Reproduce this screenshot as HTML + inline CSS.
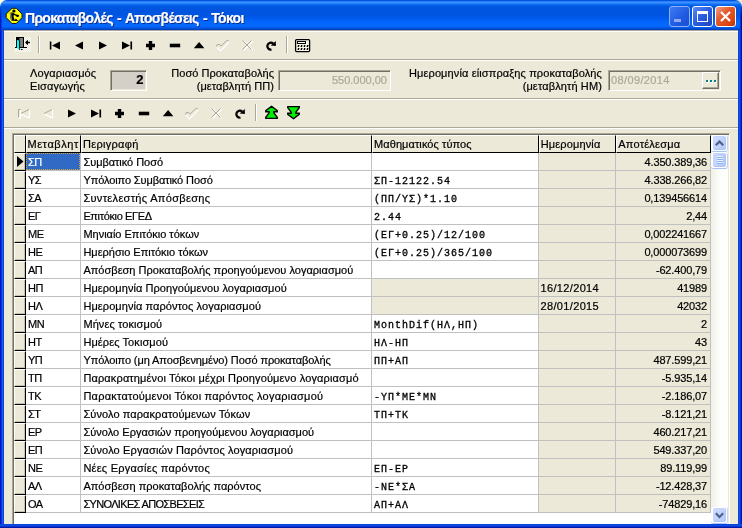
<!DOCTYPE html>
<html><head><meta charset="utf-8"><title>w</title>
<style>
html,body{margin:0;padding:0;}
body{will-change:transform;-webkit-text-stroke:.2px;width:742px;height:528px;overflow:hidden;position:relative;background:#ece9d8;font-family:"Liberation Sans",sans-serif;font-size:11px;color:#000;}
.abs{position:absolute;}
#title{left:0;top:0;width:742px;height:30px;background:linear-gradient(to bottom,#0052e0 1.67%,#2a7efb 5.00%,#3d90ff 8.33%,#2581fb 11.67%,#0f6df2 15.00%,#0460e9 18.33%,#0059e3 21.67%,#0055e0 25.00%,#0055e0 48.33%,#0057e6 55.00%,#005bee 61.67%,#0161f6 68.33%,#0367fd 75.00%,#0468fe 85.00%,#0364f8 88.33%,#025bea 91.67%,#014fd6 95.00%,#0043be 98.33%);border-radius:7px 7px 0 0;}
#cornerL{left:0;top:0;width:8px;height:8px;background:#fffde6;}
#cornerR{left:734px;top:0;width:8px;height:8px;background:#ece9d8;}
#bl{left:0;top:30px;width:4px;height:498px;background:linear-gradient(to right,#0016ca 0,#0016ca 25%,#0733d9 25%,#0733d9 50%,#1560e9 50%,#1560e9 75%,#0a44dd 75%,#0a44dd 100%);}
#br{left:738px;top:30px;width:4px;height:498px;background:linear-gradient(to right,#0a44dd 0,#0a44dd 25%,#104fe3 25%,#104fe3 50%,#0733d9 50%,#0733d9 75%,#0016b8 75%,#0016b8 100%);}
#bb{left:0;top:524px;width:742px;height:4px;background:linear-gradient(to bottom,#0a44dd 0,#0a44dd 25%,#0e4ce2 25%,#0e4ce2 50%,#0835d2 50%,#0835d2 75%,#001aa8 75%,#001aa8 100%);}
#ttext{left:25px;top:10px;color:#fff;font-weight:bold;font-size:14px;line-height:16px;white-space:nowrap;text-shadow:1px 1px 0 #0a2a8c;letter-spacing:-0.71px;word-spacing:1.2px;}
.cb{top:6px;width:21px;height:21px;border-radius:3px;box-sizing:border-box;border:1px solid #fff;}
.hl{left:4px;width:734px;height:1px;}
.lbl{font-size:11px;line-height:13px;white-space:nowrap;letter-spacing:.12px;}
.inp{box-sizing:border-box;border:1px solid;border-color:#7f9db9;}
.sunk{box-sizing:border-box;border-top:1px solid #aca899;border-left:1px solid #aca899;border-bottom:1px solid #fff;border-right:1px solid #fff;box-shadow:inset 1px 1px 0 #716f64,inset -1px -1px 0 #ece9d8;}
#grid{left:12px;top:133px;width:718px;height:391px;background:#fff;box-sizing:border-box;border-top:1px solid #aca899;border-left:1px solid #aca899;border-right:1px solid #fff;box-shadow:inset 1px 1px 0 #716f64,inset -1px 0 0 #ece9d8;}
.cell{position:absolute;height:18px;line-height:18px;font-size:11px;white-space:nowrap;overflow:hidden;box-sizing:border-box;}
.mono{font-family:"Liberation Mono",monospace;font-size:10px;letter-spacing:1px;line-height:22px;-webkit-text-stroke:.3px #000;}
.hd{position:absolute;top:135px;height:18px;background:#ece9d8;box-sizing:border-box;border-right:1px solid #000;border-bottom:1px solid #000;border-top:1px solid #fff;border-left:1px solid #fff;font-size:11px;line-height:16px;padding-left:2px;white-space:nowrap;overflow:hidden;}
</style></head><body>

<div class="abs" id="cornerL"></div><div class="abs" id="cornerR"></div>
<div class="abs" id="title"></div>
<div class="abs" id="bl"></div><div class="abs" id="br"></div><div class="abs" id="bb"></div>
<div class="abs" style="left:740px;top:7px;width:1px;height:23px;background:linear-gradient(to bottom,rgba(8,48,208,0),#0830d0 40%)"></div><div class="abs" style="left:741px;top:7px;width:1px;height:23px;background:linear-gradient(to bottom,rgba(0,22,160,.3),#00138c 40%)"></div><div class="abs" style="left:0;top:7px;width:1px;height:23px;background:linear-gradient(to bottom,rgba(0,22,202,.2),#0016ca 50%)"></div><div class="abs" style="left:1px;top:7px;width:1px;height:23px;background:linear-gradient(to bottom,rgba(7,51,217,0),rgba(7,51,217,.8) 60%)"></div>
<svg class="abs" style="left:0px;top:0px" width="30" height="30" viewBox="0 0 30 30"><path d="M12 8.300h4.300l5.700 5.700v3.600l-5.700 5.900h-4.300l-5.800 -5.900v-3.600z" fill="#ffff00" stroke="#1a1a00" stroke-width="1"/><circle cx="13.900" cy="11" r="1.600" fill="#000"/><path d="M12 12.600l2.400 .6l-.9 3.300l.1 4.200h-2.200l-1.200 -3.500l.2 -3z" fill="#111"/><path d="M10.600 14.200l.9 6.300" stroke="#888" stroke-width="1.200"/><path d="M9.500 13.200l3 -.5" stroke="#444" stroke-width=".8"/><path d="M13.400 14.200l4 1.500" stroke="#000" stroke-width="1.400"/><path d="M16.600 14.800l2.500 .3l-.6 1.900h-2z" fill="#000"/><path d="M12.800 17l1.300 3.700" stroke="#000" stroke-width="1.400"/><path d="M13.900 20.900l2.100 -2.300l2.100 2.300z" fill="#000"/></svg>
<div class="abs" id="ttext">Προκαταβολές - Αποσβέσεις - Τόκοι</div>
<div class="abs cb" style="left:669px;background:linear-gradient(135deg,#3f7af2,#1f5be2 60%,#1b4fd2);border-color:#8fb0f4;"><div class="abs" style="left:4px;top:12px;width:7px;height:3px;background:#8fa8f0"></div></div>
<div class="abs cb" style="left:692px;background:linear-gradient(135deg,#5b8af5,#2a5be0 50%,#1e46c2);"><div class="abs" style="left:4px;top:4px;width:11px;height:11px;box-sizing:border-box;border:1px solid #fff;border-top:3px solid #fff;"></div></div>
<div class="abs cb" style="left:715px;background:linear-gradient(135deg,#f0a085 0,#e35a2e 40%,#dc4712 75%,#bb3203 100%);"><svg class="abs" style="left:0;top:0" width="19" height="19"><path d="M5 5l9 9M14 5l-9 9" stroke="#fff" stroke-width="2.2"/></svg></div>
<div class="abs hl" style="top:30px;background:#aca899"></div><div class="abs hl" style="top:31px;background:#fff"></div>
<div class="abs hl" style="top:59px;background:#aca899"></div><div class="abs hl" style="top:60px;background:#fff"></div>
<div class="abs hl" style="top:98px;background:#aca899"></div><div class="abs hl" style="top:99px;background:#fff"></div>
<div class="abs hl" style="top:127px;background:#aca899"></div><div class="abs hl" style="top:128px;background:#fff"></div>
<svg class="abs" style="left:0;top:30px" width="742" height="29" viewBox="0 30 742 29">
<g><defs><pattern id="dz" width="2" height="2" patternUnits="userSpaceOnUse"><rect width="2" height="2" fill="#ece9d8"/><rect width="1" height="1" fill="#fff"/><rect x="1" y="1" width="1" height="1" fill="#fff"/></pattern></defs><rect x="15" y="37" width="16" height="15" fill="url(#dz)"/><rect x="16" y="37" width="8" height="11" fill="#000"/><rect x="19.500" y="38" width="3.500" height="9" fill="#808080"/><path d="M15 47.500h12" stroke="#000" stroke-width="1"/><path d="M17 40l2.200 .5v9.500l-2.200 -2z" fill="#00ffff"/><path d="M19.600 40.500v9.500" stroke="#000" stroke-width=".8"/><path d="M21 49.500h1.500" stroke="#000"/><path d="M25 42.500l2.200 -2.200h.8v1.500h2v1.400h-2v1.500h-.8z" fill="#000"/></g>
<path d="M38.5 36v17" stroke="#aca899"/><path d="M39.5 36v17" stroke="#fff"/>
<path fill="#000" d="M49.8 41.5h1.600v8h-1.600zM60 41.5v8l-8 -4z"/><path fill="#000" d="M83 41.5v8l-8 -4z"/><path fill="#000" d="M99 41.5v8l8 -4z"/><path fill="#000" d="M130.4 41.5h1.700v8h-1.700zM122 41.5v8l8 -4z"/><path fill="#000" d="M148.8 41.0h3.400v2.800h2.800v3.400h-2.800v2.800h-3.400v-2.800h-2.800v-3.400h2.800z"/><path fill="#000" d="M169.8 43.7h10.400v3.600h-10.400z"/><path fill="#000" d="M193.8 48.2h10.600l-5.300 -6.200z"/><path fill="none" stroke="#fff" stroke-width="1.200" d="M216.6 47.1l4 3.800l8.500 -8.700"/><path fill="none" stroke="#aca899" stroke-width="1" d="M216.5 46.5l.8 -2h2.200l1.700 1.500l5.600 -5.600h1.800"/><path fill="none" stroke="#fff" stroke-width="1.400" d="M243.8 41.3l9 9M252.8 41.3l-9 9"/><path fill="none" stroke="#aca899" stroke-width="1" d="M242.5 40.5l9 9M251.5 40.5l-9 9"/><path fill="none" stroke="#000" stroke-width="2.300" d="M271.5 49.6A3.500 3.500 0 1 1 273.2 43.6"/><path fill="#000" d="M275.8 41.0L275.9 45.9L270.7 45.6z"/>
<path d="M286.5 36v17" stroke="#aca899"/><path d="M287.5 36v17" stroke="#fff"/>
<g><rect x="295.600" y="39.600" width="14" height="12" rx="1" fill="#fbf8ea" stroke="#000" stroke-width="1.300"/><rect x="297.500" y="41.500" width="8" height="2" fill="#fff" stroke="#000" stroke-width="1"/>
<path d="M298 45h1.500l-.5 2h-1.500z" fill="#000"/>
<path d="M301 45h1.500l-.5 2h-1.500z" fill="#000"/>
<path d="M304 45h1.500l-.5 2h-1.500z" fill="#000"/>
<path d="M307 45h1.500l-.5 2h-1.500z" fill="#000"/>
<path d="M298 48h1.500l-.5 2h-1.500z" fill="#000"/>
<path d="M301 48h1.500l-.5 2h-1.500z" fill="#000"/>
<path d="M304 48h1.500l-.5 2h-1.500z" fill="#000"/>
<path d="M307 48h1.500l-.5 2h-1.500z" fill="#000"/>
</g></svg>
<div class="abs lbl" style="left:30px;top:67px">Λογαριασμός<br>Εισαγωγής</div>
<div class="abs sunk" style="left:110px;top:70px;width:37px;height:21px;background:#d4d0c8"></div>
<div class="abs" style="left:110.600px;top:72px;width:33px;text-align:right;font-size:13px;font-weight:bold;line-height:16px">2</div>
<div class="abs lbl" style="left:150px;top:67px;width:124px;text-align:right;letter-spacing:.06px">Ποσό Προκαταβολής<br>(μεταβλητή ΠΠ)</div>
<div class="abs sunk" style="left:278px;top:70px;width:113px;height:21px;background:#ece9d8"></div>
<div class="abs" style="left:278px;top:73px;width:109px;text-align:right;font-size:11px;color:#aca899;line-height:14px">550.000,00</div>
<div class="abs lbl" style="left:380px;top:67px;width:222px;text-align:right">Ημερομηνία είισπραξης προκαταβολής<br>(μεταβλητή ΗΜ)</div>
<div class="abs sunk" style="left:608px;top:70px;width:113px;height:21px;background:#ece9d8"></div>
<div class="abs" style="left:611px;top:73px;font-size:11px;color:#aca899;line-height:14px;letter-spacing:.38px">08/09/2014</div>
<div class="abs" style="left:702px;top:72px;width:17px;height:17px;box-sizing:border-box;background:#ece9d8;border-top:1px solid #fff;border-left:1px solid #fff;border-right:1px solid #716f64;border-bottom:1px solid #716f64;box-shadow:inset -1px -1px 0 #aca899"><div class="abs" style="left:3px;top:7px;width:2px;height:2px;background:#008284;box-shadow:1px 1px 0 #fff"></div><div class="abs" style="left:7px;top:7px;width:2px;height:2px;background:#008284;box-shadow:1px 1px 0 #fff"></div><div class="abs" style="left:11px;top:7px;width:2px;height:2px;background:#008284;box-shadow:1px 1px 0 #fff"></div></div>
<svg class="abs" style="left:0;top:100px" width="742" height="27" viewBox="0 100 742 27">
<path fill="none" stroke="#fff" stroke-width="1.300" d="M20.5 110.0v8h-2M21 114.1L29.5 118.1M29.5 109.5v8.600"/><path fill="none" stroke="#aca899" stroke-width="1" d="M18.5 117.5v-8h2M29 109.5L21 113.5"/><path fill="none" stroke="#fff" stroke-width="1.300" d="M44 114.1L52.5 118.1M52.5 109.5v8.600"/><path fill="none" stroke="#aca899" stroke-width="1" d="M52 109.5L44 113.5"/><path fill="#000" d="M68 109.5v8l8 -4z"/><path fill="#000" d="M99.4 109.5h1.700v8h-1.700zM91 109.5v8l8 -4z"/><path fill="#000" d="M117.8 109.0h3.400v2.800h2.800v3.400h-2.800v2.800h-3.400v-2.800h-2.800v-3.400h2.800z"/><path fill="#000" d="M138.8 111.7h10.400v3.600h-10.400z"/><path fill="#000" d="M162.8 116.2h10.600l-5.300 -6.200z"/><path fill="none" stroke="#fff" stroke-width="1.200" d="M185.6 115.1l4 3.800l8.500 -8.700"/><path fill="none" stroke="#aca899" stroke-width="1" d="M185.5 114.5l.8 -2h2.200l1.700 1.500l5.600 -5.600h1.800"/><path fill="none" stroke="#fff" stroke-width="1.400" d="M212.8 109.3l9 9M221.8 109.3l-9 9"/><path fill="none" stroke="#aca899" stroke-width="1" d="M211.5 108.5l9 9M220.5 108.5l-9 9"/><path fill="none" stroke="#000" stroke-width="2.300" d="M240.5 117.6A3.500 3.500 0 1 1 242.2 111.6"/><path fill="#000" d="M244.8 109.0L244.9 113.9L239.7 113.6z"/>
<path d="M255.5 104v17" stroke="#aca899"/><path d="M256.5 104v17" stroke="#fff"/>
<path d="M271.500 106.300l5.700 4.400v1.100h-3.300v1l3.300 4.500v1.100h-11.400v-1.100l3.300 -4.500v-1h-3.300v-1.100z" fill="#00f000" stroke="#000" stroke-width="1.400" stroke-linejoin="miter"/>
<path d="M293.500 118.700l5.700 -4.400v-1.100h-3.300v-1l3.300 -4.500v-1.100h-11.400v1.100l3.300 4.500v1h-3.300v1.100z" fill="#00f000" stroke="#000" stroke-width="1.400" stroke-linejoin="miter"/>
</svg>
<div class="abs" id="grid"></div>
<div class="hd" style="left:14px;width:12px;letter-spacing:0px;padding-left:1px"></div>
<div class="hd" style="left:26px;width:55px;letter-spacing:0.58px;padding-left:0.4px">Μεταβλητ</div>
<div class="hd" style="left:81px;width:291px;letter-spacing:0.3px;padding-left:1px">Περιγραφή</div>
<div class="hd" style="left:372px;width:167px;letter-spacing:0.08px;padding-left:1px">Μαθηματικός τύπος</div>
<div class="hd" style="left:539px;width:77px;letter-spacing:0.13px;padding-left:0.8px">Ημερομηνία</div>
<div class="hd" style="left:616px;width:95px;letter-spacing:0.24px;padding-left:1.2px">Αποτέλεσμα</div>
<div class="cell" style="left:14px;top:153px;width:12px;height:18px;background:#ece9d8;border-top:1px solid #fff;border-left:1px solid #fff;border-right:1px solid #000;border-bottom:1px solid #000;box-shadow:inset -1px -1px 0 #c5c2b2"></div>
<div class="cell" style="left:26px;top:153px;width:55px;border-right:1px solid #c0c0c0;border-bottom:1px solid #c0c0c0;padding-left:2px;letter-spacing:-0.5px;background:#316ac5;color:#fff;">ΣΠ</div>
<div class="cell" style="left:81px;top:153px;width:291px;border-right:1px solid #c0c0c0;border-bottom:1px solid #c0c0c0;padding-left:2.400px;letter-spacing:-0.038px">Συμβατικό Ποσό</div>
<div class="cell mono" style="left:372px;top:153px;width:167px;border-right:1px solid #c0c0c0;border-bottom:1px solid #c0c0c0;padding-left:2px;"></div>
<div class="cell" style="left:539px;top:153px;width:77px;border-right:1px solid #c0c0c0;border-bottom:1px solid #c0c0c0;padding-left:1.500px;letter-spacing:.35px;background:#ece9d8"></div>
<div class="cell" style="left:616px;top:153px;width:95px;border-right:1px solid #c0c0c0;border-bottom:1px solid #c0c0c0;padding-right:3px;letter-spacing:-.15px;text-align:right;background:#ece9d8">4.350.389,36</div>
<div class="cell" style="left:14px;top:171px;width:12px;height:18px;background:#ece9d8;border-top:1px solid #fff;border-left:1px solid #fff;border-right:1px solid #000;border-bottom:1px solid #000;box-shadow:inset -1px -1px 0 #c5c2b2"></div>
<div class="cell" style="left:26px;top:171px;width:55px;border-right:1px solid #c0c0c0;border-bottom:1px solid #c0c0c0;padding-left:2px;letter-spacing:-0.5px;">ΥΣ</div>
<div class="cell" style="left:81px;top:171px;width:291px;border-right:1px solid #c0c0c0;border-bottom:1px solid #c0c0c0;padding-left:2.400px;letter-spacing:-0.095px">Υπόλοιπο Συμβατικό Ποσό</div>
<div class="cell mono" style="left:372px;top:171px;width:167px;border-right:1px solid #c0c0c0;border-bottom:1px solid #c0c0c0;padding-left:2px;">ΣΠ-12122.54</div>
<div class="cell" style="left:539px;top:171px;width:77px;border-right:1px solid #c0c0c0;border-bottom:1px solid #c0c0c0;padding-left:1.500px;letter-spacing:.35px;background:#ece9d8"></div>
<div class="cell" style="left:616px;top:171px;width:95px;border-right:1px solid #c0c0c0;border-bottom:1px solid #c0c0c0;padding-right:3px;letter-spacing:-.15px;text-align:right;background:#ece9d8">4.338.266,82</div>
<div class="cell" style="left:14px;top:189px;width:12px;height:18px;background:#ece9d8;border-top:1px solid #fff;border-left:1px solid #fff;border-right:1px solid #000;border-bottom:1px solid #000;box-shadow:inset -1px -1px 0 #c5c2b2"></div>
<div class="cell" style="left:26px;top:189px;width:55px;border-right:1px solid #c0c0c0;border-bottom:1px solid #c0c0c0;padding-left:2px;letter-spacing:-0.5px;">ΣΑ</div>
<div class="cell" style="left:81px;top:189px;width:291px;border-right:1px solid #c0c0c0;border-bottom:1px solid #c0c0c0;padding-left:2.400px;letter-spacing:0.32px">Συντελεστής Απόσβεσης</div>
<div class="cell mono" style="left:372px;top:189px;width:167px;border-right:1px solid #c0c0c0;border-bottom:1px solid #c0c0c0;padding-left:2px;">(ΠΠ/ΥΣ)*1.10</div>
<div class="cell" style="left:539px;top:189px;width:77px;border-right:1px solid #c0c0c0;border-bottom:1px solid #c0c0c0;padding-left:1.500px;letter-spacing:.35px;background:#ece9d8"></div>
<div class="cell" style="left:616px;top:189px;width:95px;border-right:1px solid #c0c0c0;border-bottom:1px solid #c0c0c0;padding-right:3px;letter-spacing:-.15px;text-align:right;background:#ece9d8">0,139456614</div>
<div class="cell" style="left:14px;top:207px;width:12px;height:18px;background:#ece9d8;border-top:1px solid #fff;border-left:1px solid #fff;border-right:1px solid #000;border-bottom:1px solid #000;box-shadow:inset -1px -1px 0 #c5c2b2"></div>
<div class="cell" style="left:26px;top:207px;width:55px;border-right:1px solid #c0c0c0;border-bottom:1px solid #c0c0c0;padding-left:2px;letter-spacing:-0.5px;">ΕΓ</div>
<div class="cell" style="left:81px;top:207px;width:291px;border-right:1px solid #c0c0c0;border-bottom:1px solid #c0c0c0;padding-left:2.400px;letter-spacing:-0.358px">Επιτόκιο ΕΓΕΔ</div>
<div class="cell mono" style="left:372px;top:207px;width:167px;border-right:1px solid #c0c0c0;border-bottom:1px solid #c0c0c0;padding-left:2px;">2.44</div>
<div class="cell" style="left:539px;top:207px;width:77px;border-right:1px solid #c0c0c0;border-bottom:1px solid #c0c0c0;padding-left:1.500px;letter-spacing:.35px;background:#ece9d8"></div>
<div class="cell" style="left:616px;top:207px;width:95px;border-right:1px solid #c0c0c0;border-bottom:1px solid #c0c0c0;padding-right:3px;letter-spacing:-.15px;text-align:right;background:#ece9d8">2,44</div>
<div class="cell" style="left:14px;top:225px;width:12px;height:18px;background:#ece9d8;border-top:1px solid #fff;border-left:1px solid #fff;border-right:1px solid #000;border-bottom:1px solid #000;box-shadow:inset -1px -1px 0 #c5c2b2"></div>
<div class="cell" style="left:26px;top:225px;width:55px;border-right:1px solid #c0c0c0;border-bottom:1px solid #c0c0c0;padding-left:2px;letter-spacing:-0.5px;">ΜΕ</div>
<div class="cell" style="left:81px;top:225px;width:291px;border-right:1px solid #c0c0c0;border-bottom:1px solid #c0c0c0;padding-left:2.400px;letter-spacing:-0.01px">Μηνιαίο Επιτόκιο τόκων</div>
<div class="cell mono" style="left:372px;top:225px;width:167px;border-right:1px solid #c0c0c0;border-bottom:1px solid #c0c0c0;padding-left:2px;">(ΕΓ+0.25)/12/100</div>
<div class="cell" style="left:539px;top:225px;width:77px;border-right:1px solid #c0c0c0;border-bottom:1px solid #c0c0c0;padding-left:1.500px;letter-spacing:.35px;background:#ece9d8"></div>
<div class="cell" style="left:616px;top:225px;width:95px;border-right:1px solid #c0c0c0;border-bottom:1px solid #c0c0c0;padding-right:3px;letter-spacing:-.15px;text-align:right;background:#ece9d8">0,002241667</div>
<div class="cell" style="left:14px;top:243px;width:12px;height:18px;background:#ece9d8;border-top:1px solid #fff;border-left:1px solid #fff;border-right:1px solid #000;border-bottom:1px solid #000;box-shadow:inset -1px -1px 0 #c5c2b2"></div>
<div class="cell" style="left:26px;top:243px;width:55px;border-right:1px solid #c0c0c0;border-bottom:1px solid #c0c0c0;padding-left:2px;letter-spacing:-0.5px;">ΗΕ</div>
<div class="cell" style="left:81px;top:243px;width:291px;border-right:1px solid #c0c0c0;border-bottom:1px solid #c0c0c0;padding-left:2.400px;letter-spacing:-0.005px">Ημερήσιο Επιτόκιο τόκων</div>
<div class="cell mono" style="left:372px;top:243px;width:167px;border-right:1px solid #c0c0c0;border-bottom:1px solid #c0c0c0;padding-left:2px;">(ΕΓ+0.25)/365/100</div>
<div class="cell" style="left:539px;top:243px;width:77px;border-right:1px solid #c0c0c0;border-bottom:1px solid #c0c0c0;padding-left:1.500px;letter-spacing:.35px;background:#ece9d8"></div>
<div class="cell" style="left:616px;top:243px;width:95px;border-right:1px solid #c0c0c0;border-bottom:1px solid #c0c0c0;padding-right:3px;letter-spacing:-.15px;text-align:right;background:#ece9d8">0,000073699</div>
<div class="cell" style="left:14px;top:261px;width:12px;height:18px;background:#ece9d8;border-top:1px solid #fff;border-left:1px solid #fff;border-right:1px solid #000;border-bottom:1px solid #000;box-shadow:inset -1px -1px 0 #c5c2b2"></div>
<div class="cell" style="left:26px;top:261px;width:55px;border-right:1px solid #c0c0c0;border-bottom:1px solid #c0c0c0;padding-left:2px;letter-spacing:-0.5px;">ΑΠ</div>
<div class="cell" style="left:81px;top:261px;width:291px;border-right:1px solid #c0c0c0;border-bottom:1px solid #c0c0c0;padding-left:2.400px;letter-spacing:0.016px">Απόσβεση Προκαταβολής προηγούμενου λογαριασμού</div>
<div class="cell mono" style="left:372px;top:261px;width:167px;border-right:1px solid #c0c0c0;border-bottom:1px solid #c0c0c0;padding-left:2px;"></div>
<div class="cell" style="left:539px;top:261px;width:77px;border-right:1px solid #c0c0c0;border-bottom:1px solid #c0c0c0;padding-left:1.500px;letter-spacing:.35px;background:#ece9d8"></div>
<div class="cell" style="left:616px;top:261px;width:95px;border-right:1px solid #c0c0c0;border-bottom:1px solid #c0c0c0;padding-right:3px;letter-spacing:-.15px;text-align:right;background:#ece9d8">-62.400,79</div>
<div class="cell" style="left:14px;top:279px;width:12px;height:18px;background:#ece9d8;border-top:1px solid #fff;border-left:1px solid #fff;border-right:1px solid #000;border-bottom:1px solid #000;box-shadow:inset -1px -1px 0 #c5c2b2"></div>
<div class="cell" style="left:26px;top:279px;width:55px;border-right:1px solid #c0c0c0;border-bottom:1px solid #c0c0c0;padding-left:2px;letter-spacing:-0.5px;">ΗΠ</div>
<div class="cell" style="left:81px;top:279px;width:291px;border-right:1px solid #c0c0c0;border-bottom:1px solid #c0c0c0;padding-left:2.400px;letter-spacing:0.068px">Ημερομηνία Προηγούμενου λογαριασμού</div>
<div class="cell mono" style="left:372px;top:279px;width:167px;border-right:1px solid #c0c0c0;border-bottom:1px solid #c0c0c0;padding-left:2px;background:#ece9d8;"></div>
<div class="cell" style="left:539px;top:279px;width:77px;border-right:1px solid #c0c0c0;border-bottom:1px solid #c0c0c0;padding-left:1.500px;letter-spacing:.35px;background:#ece9d8">16/12/2014</div>
<div class="cell" style="left:616px;top:279px;width:95px;border-right:1px solid #c0c0c0;border-bottom:1px solid #c0c0c0;padding-right:3px;letter-spacing:-.15px;text-align:right;background:#ece9d8">41989</div>
<div class="cell" style="left:14px;top:297px;width:12px;height:18px;background:#ece9d8;border-top:1px solid #fff;border-left:1px solid #fff;border-right:1px solid #000;border-bottom:1px solid #000;box-shadow:inset -1px -1px 0 #c5c2b2"></div>
<div class="cell" style="left:26px;top:297px;width:55px;border-right:1px solid #c0c0c0;border-bottom:1px solid #c0c0c0;padding-left:2px;letter-spacing:-0.5px;">ΗΛ</div>
<div class="cell" style="left:81px;top:297px;width:291px;border-right:1px solid #c0c0c0;border-bottom:1px solid #c0c0c0;padding-left:2.400px;letter-spacing:0.073px">Ημερομηνία παρόντος λογαριασμού</div>
<div class="cell mono" style="left:372px;top:297px;width:167px;border-right:1px solid #c0c0c0;border-bottom:1px solid #c0c0c0;padding-left:2px;background:#ece9d8;"></div>
<div class="cell" style="left:539px;top:297px;width:77px;border-right:1px solid #c0c0c0;border-bottom:1px solid #c0c0c0;padding-left:1.500px;letter-spacing:.35px;background:#ece9d8">28/01/2015</div>
<div class="cell" style="left:616px;top:297px;width:95px;border-right:1px solid #c0c0c0;border-bottom:1px solid #c0c0c0;padding-right:3px;letter-spacing:-.15px;text-align:right;background:#ece9d8">42032</div>
<div class="cell" style="left:14px;top:315px;width:12px;height:18px;background:#ece9d8;border-top:1px solid #fff;border-left:1px solid #fff;border-right:1px solid #000;border-bottom:1px solid #000;box-shadow:inset -1px -1px 0 #c5c2b2"></div>
<div class="cell" style="left:26px;top:315px;width:55px;border-right:1px solid #c0c0c0;border-bottom:1px solid #c0c0c0;padding-left:2px;letter-spacing:-0.5px;">ΜΝ</div>
<div class="cell" style="left:81px;top:315px;width:291px;border-right:1px solid #c0c0c0;border-bottom:1px solid #c0c0c0;padding-left:2.400px;letter-spacing:0.092px">Μήνες τοκισμού</div>
<div class="cell mono" style="left:372px;top:315px;width:167px;border-right:1px solid #c0c0c0;border-bottom:1px solid #c0c0c0;padding-left:2px;">MonthDif(ΗΛ,ΗΠ)</div>
<div class="cell" style="left:539px;top:315px;width:77px;border-right:1px solid #c0c0c0;border-bottom:1px solid #c0c0c0;padding-left:1.500px;letter-spacing:.35px;background:#ece9d8"></div>
<div class="cell" style="left:616px;top:315px;width:95px;border-right:1px solid #c0c0c0;border-bottom:1px solid #c0c0c0;padding-right:3px;letter-spacing:-.15px;text-align:right;background:#ece9d8">2</div>
<div class="cell" style="left:14px;top:333px;width:12px;height:18px;background:#ece9d8;border-top:1px solid #fff;border-left:1px solid #fff;border-right:1px solid #000;border-bottom:1px solid #000;box-shadow:inset -1px -1px 0 #c5c2b2"></div>
<div class="cell" style="left:26px;top:333px;width:55px;border-right:1px solid #c0c0c0;border-bottom:1px solid #c0c0c0;padding-left:2px;letter-spacing:-0.5px;">ΗΤ</div>
<div class="cell" style="left:81px;top:333px;width:291px;border-right:1px solid #c0c0c0;border-bottom:1px solid #c0c0c0;padding-left:2.400px;letter-spacing:0.086px">Ημέρες Τοκισμού</div>
<div class="cell mono" style="left:372px;top:333px;width:167px;border-right:1px solid #c0c0c0;border-bottom:1px solid #c0c0c0;padding-left:2px;">ΗΛ-ΗΠ</div>
<div class="cell" style="left:539px;top:333px;width:77px;border-right:1px solid #c0c0c0;border-bottom:1px solid #c0c0c0;padding-left:1.500px;letter-spacing:.35px;background:#ece9d8"></div>
<div class="cell" style="left:616px;top:333px;width:95px;border-right:1px solid #c0c0c0;border-bottom:1px solid #c0c0c0;padding-right:3px;letter-spacing:-.15px;text-align:right;background:#ece9d8">43</div>
<div class="cell" style="left:14px;top:351px;width:12px;height:18px;background:#ece9d8;border-top:1px solid #fff;border-left:1px solid #fff;border-right:1px solid #000;border-bottom:1px solid #000;box-shadow:inset -1px -1px 0 #c5c2b2"></div>
<div class="cell" style="left:26px;top:351px;width:55px;border-right:1px solid #c0c0c0;border-bottom:1px solid #c0c0c0;padding-left:2px;letter-spacing:-0.5px;">ΥΠ</div>
<div class="cell" style="left:81px;top:351px;width:291px;border-right:1px solid #c0c0c0;border-bottom:1px solid #c0c0c0;padding-left:2.400px;letter-spacing:-0.095px">Υπόλοιπο (μη Αποσβενημένο) Ποσό προκαταβολής</div>
<div class="cell mono" style="left:372px;top:351px;width:167px;border-right:1px solid #c0c0c0;border-bottom:1px solid #c0c0c0;padding-left:2px;">ΠΠ+ΑΠ</div>
<div class="cell" style="left:539px;top:351px;width:77px;border-right:1px solid #c0c0c0;border-bottom:1px solid #c0c0c0;padding-left:1.500px;letter-spacing:.35px;background:#ece9d8"></div>
<div class="cell" style="left:616px;top:351px;width:95px;border-right:1px solid #c0c0c0;border-bottom:1px solid #c0c0c0;padding-right:3px;letter-spacing:-.15px;text-align:right;background:#ece9d8">487.599,21</div>
<div class="cell" style="left:14px;top:369px;width:12px;height:18px;background:#ece9d8;border-top:1px solid #fff;border-left:1px solid #fff;border-right:1px solid #000;border-bottom:1px solid #000;box-shadow:inset -1px -1px 0 #c5c2b2"></div>
<div class="cell" style="left:26px;top:369px;width:55px;border-right:1px solid #c0c0c0;border-bottom:1px solid #c0c0c0;padding-left:2px;letter-spacing:-0.5px;">ΤΠ</div>
<div class="cell" style="left:81px;top:369px;width:291px;border-right:1px solid #c0c0c0;border-bottom:1px solid #c0c0c0;padding-left:2.400px;letter-spacing:0.135px">Παρακρατημένοι Τόκοι μέχρι Προηγούμενο λογαριασμό</div>
<div class="cell mono" style="left:372px;top:369px;width:167px;border-right:1px solid #c0c0c0;border-bottom:1px solid #c0c0c0;padding-left:2px;"></div>
<div class="cell" style="left:539px;top:369px;width:77px;border-right:1px solid #c0c0c0;border-bottom:1px solid #c0c0c0;padding-left:1.500px;letter-spacing:.35px;background:#ece9d8"></div>
<div class="cell" style="left:616px;top:369px;width:95px;border-right:1px solid #c0c0c0;border-bottom:1px solid #c0c0c0;padding-right:3px;letter-spacing:-.15px;text-align:right;background:#ece9d8">-5.935,14</div>
<div class="cell" style="left:14px;top:387px;width:12px;height:18px;background:#ece9d8;border-top:1px solid #fff;border-left:1px solid #fff;border-right:1px solid #000;border-bottom:1px solid #000;box-shadow:inset -1px -1px 0 #c5c2b2"></div>
<div class="cell" style="left:26px;top:387px;width:55px;border-right:1px solid #c0c0c0;border-bottom:1px solid #c0c0c0;padding-left:2px;letter-spacing:-0.5px;">ΤΚ</div>
<div class="cell" style="left:81px;top:387px;width:291px;border-right:1px solid #c0c0c0;border-bottom:1px solid #c0c0c0;padding-left:2.400px;letter-spacing:0.234px">Παρακτατούμενοι Τόκοι παρόντος λογαριασμού</div>
<div class="cell mono" style="left:372px;top:387px;width:167px;border-right:1px solid #c0c0c0;border-bottom:1px solid #c0c0c0;padding-left:2px;">-ΥΠ*ΜΕ*ΜΝ</div>
<div class="cell" style="left:539px;top:387px;width:77px;border-right:1px solid #c0c0c0;border-bottom:1px solid #c0c0c0;padding-left:1.500px;letter-spacing:.35px;background:#ece9d8"></div>
<div class="cell" style="left:616px;top:387px;width:95px;border-right:1px solid #c0c0c0;border-bottom:1px solid #c0c0c0;padding-right:3px;letter-spacing:-.15px;text-align:right;background:#ece9d8">-2.186,07</div>
<div class="cell" style="left:14px;top:405px;width:12px;height:18px;background:#ece9d8;border-top:1px solid #fff;border-left:1px solid #fff;border-right:1px solid #000;border-bottom:1px solid #000;box-shadow:inset -1px -1px 0 #c5c2b2"></div>
<div class="cell" style="left:26px;top:405px;width:55px;border-right:1px solid #c0c0c0;border-bottom:1px solid #c0c0c0;padding-left:2px;letter-spacing:-0.5px;">ΣΤ</div>
<div class="cell" style="left:81px;top:405px;width:291px;border-right:1px solid #c0c0c0;border-bottom:1px solid #c0c0c0;padding-left:2.400px;letter-spacing:0.089px">Σύνολο παρακρατούμενων Τόκων</div>
<div class="cell mono" style="left:372px;top:405px;width:167px;border-right:1px solid #c0c0c0;border-bottom:1px solid #c0c0c0;padding-left:2px;">ΤΠ+ΤΚ</div>
<div class="cell" style="left:539px;top:405px;width:77px;border-right:1px solid #c0c0c0;border-bottom:1px solid #c0c0c0;padding-left:1.500px;letter-spacing:.35px;background:#ece9d8"></div>
<div class="cell" style="left:616px;top:405px;width:95px;border-right:1px solid #c0c0c0;border-bottom:1px solid #c0c0c0;padding-right:3px;letter-spacing:-.15px;text-align:right;background:#ece9d8">-8.121,21</div>
<div class="cell" style="left:14px;top:423px;width:12px;height:18px;background:#ece9d8;border-top:1px solid #fff;border-left:1px solid #fff;border-right:1px solid #000;border-bottom:1px solid #000;box-shadow:inset -1px -1px 0 #c5c2b2"></div>
<div class="cell" style="left:26px;top:423px;width:55px;border-right:1px solid #c0c0c0;border-bottom:1px solid #c0c0c0;padding-left:2px;letter-spacing:-0.5px;">ΕΡ</div>
<div class="cell" style="left:81px;top:423px;width:291px;border-right:1px solid #c0c0c0;border-bottom:1px solid #c0c0c0;padding-left:2.400px;letter-spacing:0.023px">Σύνολο Εργασιών προηγούμενου λογαριασμού</div>
<div class="cell mono" style="left:372px;top:423px;width:167px;border-right:1px solid #c0c0c0;border-bottom:1px solid #c0c0c0;padding-left:2px;"></div>
<div class="cell" style="left:539px;top:423px;width:77px;border-right:1px solid #c0c0c0;border-bottom:1px solid #c0c0c0;padding-left:1.500px;letter-spacing:.35px;background:#ece9d8"></div>
<div class="cell" style="left:616px;top:423px;width:95px;border-right:1px solid #c0c0c0;border-bottom:1px solid #c0c0c0;padding-right:3px;letter-spacing:-.15px;text-align:right;background:#ece9d8">460.217,21</div>
<div class="cell" style="left:14px;top:441px;width:12px;height:18px;background:#ece9d8;border-top:1px solid #fff;border-left:1px solid #fff;border-right:1px solid #000;border-bottom:1px solid #000;box-shadow:inset -1px -1px 0 #c5c2b2"></div>
<div class="cell" style="left:26px;top:441px;width:55px;border-right:1px solid #c0c0c0;border-bottom:1px solid #c0c0c0;padding-left:2px;letter-spacing:-0.5px;">ΕΠ</div>
<div class="cell" style="left:81px;top:441px;width:291px;border-right:1px solid #c0c0c0;border-bottom:1px solid #c0c0c0;padding-left:2.400px;letter-spacing:0.129px">Σύνολο Εργασιών Παρόντος λογαριασμού</div>
<div class="cell mono" style="left:372px;top:441px;width:167px;border-right:1px solid #c0c0c0;border-bottom:1px solid #c0c0c0;padding-left:2px;"></div>
<div class="cell" style="left:539px;top:441px;width:77px;border-right:1px solid #c0c0c0;border-bottom:1px solid #c0c0c0;padding-left:1.500px;letter-spacing:.35px;background:#ece9d8"></div>
<div class="cell" style="left:616px;top:441px;width:95px;border-right:1px solid #c0c0c0;border-bottom:1px solid #c0c0c0;padding-right:3px;letter-spacing:-.15px;text-align:right;background:#ece9d8">549.337,20</div>
<div class="cell" style="left:14px;top:459px;width:12px;height:18px;background:#ece9d8;border-top:1px solid #fff;border-left:1px solid #fff;border-right:1px solid #000;border-bottom:1px solid #000;box-shadow:inset -1px -1px 0 #c5c2b2"></div>
<div class="cell" style="left:26px;top:459px;width:55px;border-right:1px solid #c0c0c0;border-bottom:1px solid #c0c0c0;padding-left:2px;letter-spacing:-0.5px;">ΝΕ</div>
<div class="cell" style="left:81px;top:459px;width:291px;border-right:1px solid #c0c0c0;border-bottom:1px solid #c0c0c0;padding-left:2.400px;letter-spacing:0.238px">Νέες Εργασίες παρόντος</div>
<div class="cell mono" style="left:372px;top:459px;width:167px;border-right:1px solid #c0c0c0;border-bottom:1px solid #c0c0c0;padding-left:2px;">ΕΠ-ΕΡ</div>
<div class="cell" style="left:539px;top:459px;width:77px;border-right:1px solid #c0c0c0;border-bottom:1px solid #c0c0c0;padding-left:1.500px;letter-spacing:.35px;background:#ece9d8"></div>
<div class="cell" style="left:616px;top:459px;width:95px;border-right:1px solid #c0c0c0;border-bottom:1px solid #c0c0c0;padding-right:3px;letter-spacing:-.15px;text-align:right;background:#ece9d8">89.119,99</div>
<div class="cell" style="left:14px;top:477px;width:12px;height:18px;background:#ece9d8;border-top:1px solid #fff;border-left:1px solid #fff;border-right:1px solid #000;border-bottom:1px solid #000;box-shadow:inset -1px -1px 0 #c5c2b2"></div>
<div class="cell" style="left:26px;top:477px;width:55px;border-right:1px solid #c0c0c0;border-bottom:1px solid #c0c0c0;padding-left:2px;letter-spacing:-0.5px;">ΑΛ</div>
<div class="cell" style="left:81px;top:477px;width:291px;border-right:1px solid #c0c0c0;border-bottom:1px solid #c0c0c0;padding-left:2.400px;letter-spacing:0.028px">Απόσβεση προκαταβολής παρόντος</div>
<div class="cell mono" style="left:372px;top:477px;width:167px;border-right:1px solid #c0c0c0;border-bottom:1px solid #c0c0c0;padding-left:2px;">-ΝΕ*ΣΑ</div>
<div class="cell" style="left:539px;top:477px;width:77px;border-right:1px solid #c0c0c0;border-bottom:1px solid #c0c0c0;padding-left:1.500px;letter-spacing:.35px;background:#ece9d8"></div>
<div class="cell" style="left:616px;top:477px;width:95px;border-right:1px solid #c0c0c0;border-bottom:1px solid #c0c0c0;padding-right:3px;letter-spacing:-.15px;text-align:right;background:#ece9d8">-12.428,37</div>
<div class="cell" style="left:14px;top:495px;width:12px;height:18px;background:#ece9d8;border-top:1px solid #fff;border-left:1px solid #fff;border-right:1px solid #000;border-bottom:1px solid #000;box-shadow:inset -1px -1px 0 #c5c2b2"></div>
<div class="cell" style="left:26px;top:495px;width:55px;border-right:1px solid #c0c0c0;border-bottom:1px solid #c0c0c0;padding-left:2px;letter-spacing:-0.5px;">ΟΑ</div>
<div class="cell" style="left:81px;top:495px;width:291px;border-right:1px solid #c0c0c0;border-bottom:1px solid #c0c0c0;padding-left:2.400px;letter-spacing:-0.663px">ΣΥΝΟΛΙΚΕΣ ΑΠΟΣΒΕΣΕΙΣ</div>
<div class="cell mono" style="left:372px;top:495px;width:167px;border-right:1px solid #c0c0c0;border-bottom:1px solid #c0c0c0;padding-left:2px;">ΑΠ+ΑΛ</div>
<div class="cell" style="left:539px;top:495px;width:77px;border-right:1px solid #c0c0c0;border-bottom:1px solid #c0c0c0;padding-left:1.500px;letter-spacing:.35px;background:#ece9d8"></div>
<div class="cell" style="left:616px;top:495px;width:95px;border-right:1px solid #c0c0c0;border-bottom:1px solid #c0c0c0;padding-right:3px;letter-spacing:-.15px;text-align:right;background:#ece9d8">-74829,16</div>
<div class="abs" style="left:26px;top:153px;width:54px;height:17px;box-sizing:border-box;border:1px dotted #d8a040"></div>
<svg class="abs" style="left:14px;top:153px" width="12" height="18"><path d="M3 3v11l6.500 -5.500z" fill="#000"/></svg>
<div class="abs" style="left:711px;top:135px;width:17px;height:389px;background:linear-gradient(to right,#f0efe8,#f8f8f3 30%,#fefefb 60%,#fefefb)"></div>
<div class="abs" style="left:711px;top:135px;width:17px;height:17px;box-sizing:border-box;border-radius:3px;background:#fff;border-right:1px solid #c3d3f8;border-bottom:1px solid #a9c0f3"></div><div class="abs" style="left:712.500px;top:136px;width:13.500px;height:14px;box-sizing:border-box;border:1px solid #c6d5fc;border-right-color:#b3c7f6;border-bottom-color:#abc1f3;border-radius:2px;background:linear-gradient(135deg,#cfdcfe,#c1d2fc 50%,#b6c9f8)"></div><svg class="abs" style="left:711px;top:135px" width="17" height="17"><path d="M4.800 10.200l3.700 -3.700l3.700 3.700" fill="none" stroke="#4d6185" stroke-width="2.200"/></svg>
<div class="abs" style="left:711px;top:507px;width:17px;height:17px;box-sizing:border-box;border-radius:3px;background:#fff;border-right:1px solid #c3d3f8;border-bottom:1px solid #a9c0f3"></div><div class="abs" style="left:712.500px;top:508px;width:13.500px;height:14px;box-sizing:border-box;border:1px solid #c6d5fc;border-right-color:#b3c7f6;border-bottom-color:#abc1f3;border-radius:2px;background:linear-gradient(135deg,#cfdcfe,#c1d2fc 50%,#b6c9f8)"></div><svg class="abs" style="left:711px;top:507px" width="17" height="17"><path d="M4.800 6.300l3.700 3.700l3.700 -3.700" fill="none" stroke="#4d6185" stroke-width="2.200"/></svg>
<div class="abs" style="left:711px;top:152px;width:17px;height:17px;box-sizing:border-box;border-radius:3px;background:#fff;border-right:1px solid #c3d3f8;border-bottom:1px solid #a9c0f3"></div><div class="abs" style="left:712.500px;top:153px;width:13.500px;height:14px;box-sizing:border-box;border:1px solid #c6d5fc;border-right-color:#b3c7f6;border-bottom-color:#abc1f3;border-radius:2px;background:linear-gradient(to right,#cbd9fe,#bdcefb 60%,#b5c8f8)"></div>
<div class="abs" style="left:716.500px;top:156px;width:6.500px;height:1px;background:#eef4fe;box-shadow:0 1px 0 #8cb0f8,0 2px 0 #eef4fe,0 3px 0 #8cb0f8,0 4px 0 #eef4fe,0 5px 0 #8cb0f8,0 6px 0 #eef4fe,0 7px 0 #8cb0f8"></div>
</body></html>
